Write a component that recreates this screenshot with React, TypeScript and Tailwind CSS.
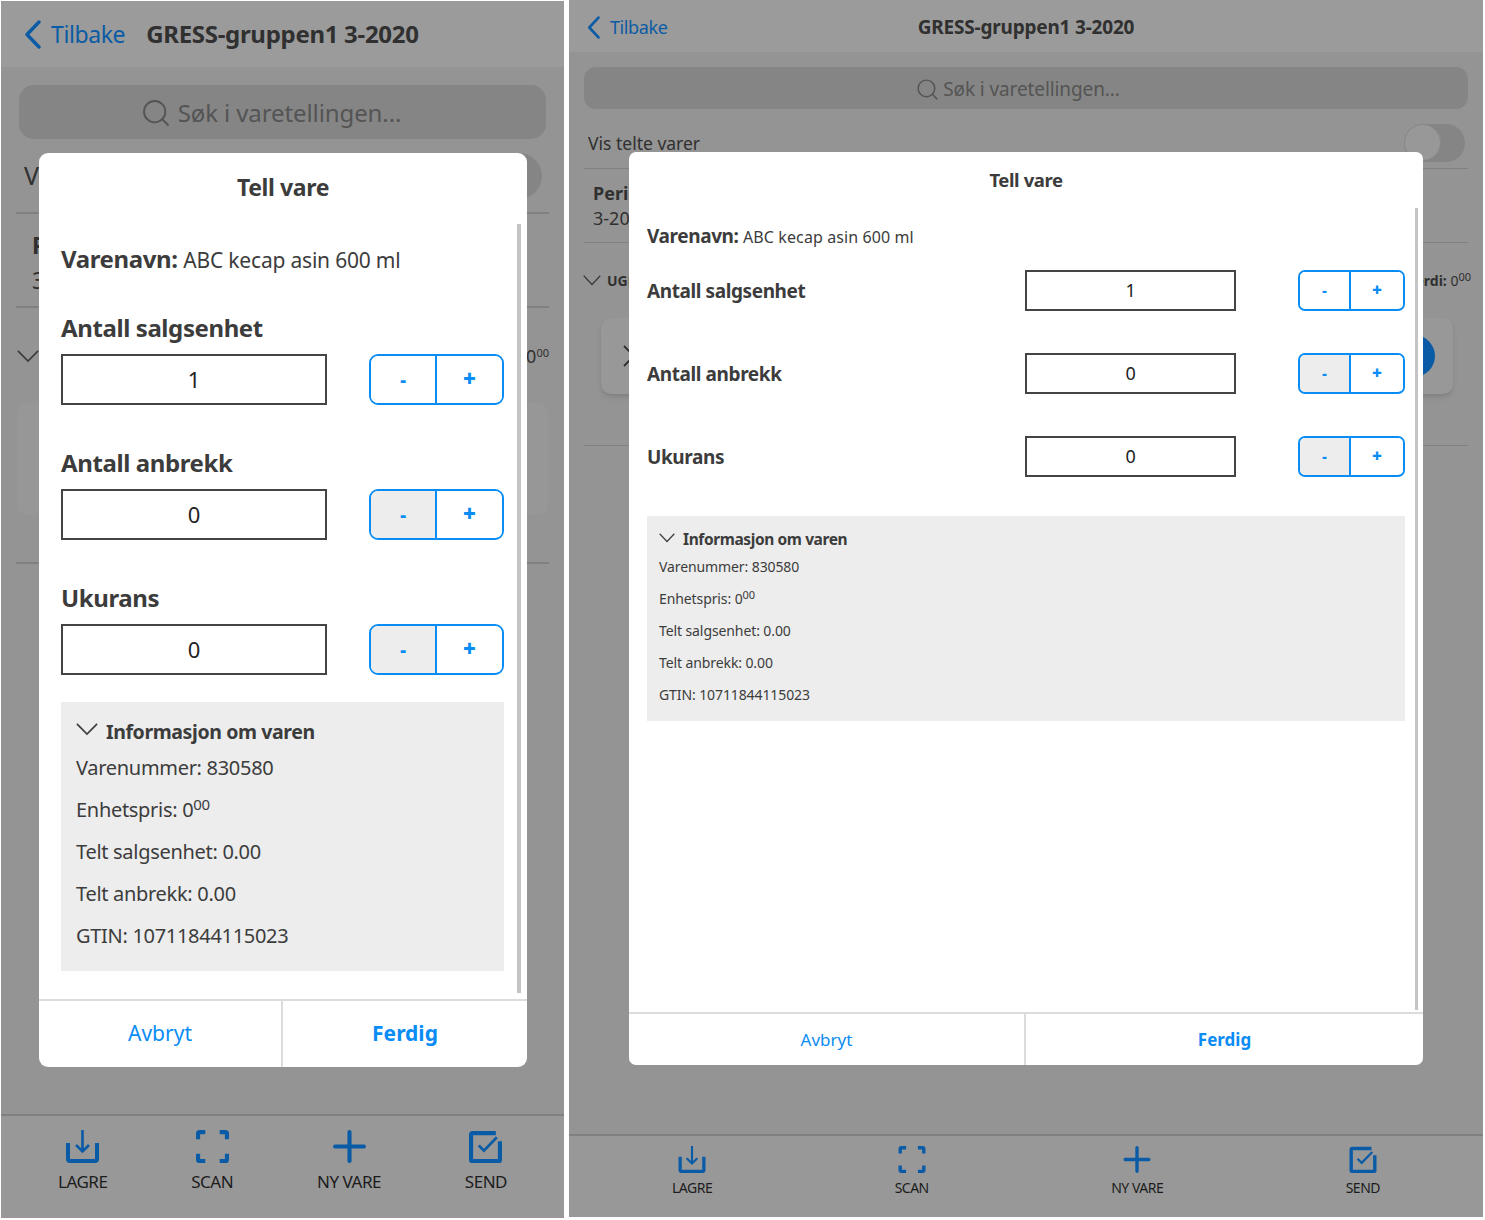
import { Search } from 'lucide-react'

const font = 'font-["Noto_Sans",sans-serif]'

function IconLagre({ className }: { className: string }) {
  return (
    <svg viewBox="0 0 33 33" className={className} fill="none" stroke="#0a5ba5">
      <path d="M2 13v16.500a1.500 1.500 0 0 0 1.500 1.500h26a1.500 1.500 0 0 0 1.500-1.500V13" strokeWidth="4" />
      <path d="M16.500 0v21M10 15l6.500 6.500L23 15" strokeWidth="2.600" />
    </svg>
  )
}

function IconScan({ className }: { className: string }) {
  return (
    <svg viewBox="0 0 32 32" className={className} fill="none" stroke="#0a5ba5" strokeWidth="4">
      <path d="M9 2H3.500a1.500 1.500 0 0 0-1.500 1.500V9M23 2h5.500a1.500 1.500 0 0 1 1.500 1.500V9M2 23v5.500A1.500 1.500 0 0 0 3.500 30H9M30 23v5.500a1.500 1.500 0 0 1-1.500 1.500H23" />
    </svg>
  )
}

function IconPlus({ className }: { className: string }) {
  return (
    <svg viewBox="0 0 32 32" className={className} fill="none" stroke="#0a5ba5" strokeWidth="4" strokeLinecap="round">
      <path d="M16 2v28M2 16h28" />
    </svg>
  )
}

function IconSend({ className }: { className: string }) {
  return (
    <svg viewBox="0 0 32 32" className={className} fill="none" stroke="#0a5ba5">
      <path d="M26 3H3.500a1.500 1.500 0 0 0-1.500 1.500v24.500a1 1 0 0 0 1 1h26a1 1 0 0 0 1-1V11" strokeWidth="4" />
      <path d="M9.500 15l5 5L27 7" strokeWidth="2.600" />
    </svg>
  )
}

function Chevron({ className, stroke = '#3c3c3c' }: { className: string; stroke?: string }) {
  return (
    <svg viewBox="0 0 24 14" className={className} fill="none" stroke={stroke} strokeWidth="1.800" preserveAspectRatio="none">
      <path d="M1 1l11 11L23 1" />
    </svg>
  )
}

function BackChevron({ className }: { className: string }) {
  return (
    <svg viewBox="0 0 17 29" className={className} fill="none" stroke="#0a5ba5" strokeWidth="3.400" strokeLinecap="round" strokeLinejoin="round" preserveAspectRatio="none">
      <path d="M15 2L3 14.500 15 27" />
    </svg>
  )
}

function Stepper({ minusOff, wide }: { minusOff: boolean; wide: boolean }) {
  return (
    <div className={`flex border-2 border-[#0a8cf5] overflow-hidden ${wide ? 'w-[135px] h-[51px] rounded-[9px]' : 'w-[107px] h-[41px] rounded-[7px]'}`}>
      <div className={`flex items-center justify-center font-black text-[#0a8cf5] border-r-2 border-[#0a8cf5] ${minusOff ? 'bg-[#ededed]' : 'bg-white'} ${wide ? 'w-[66px] text-[18px]' : 'w-[51px] text-[14px]'}`}>-</div>
      <div className={`flex-1 flex items-center justify-center font-black text-[#0a8cf5] bg-white ${wide ? 'text-[22px] -translate-y-[1px]' : 'text-[17px] -translate-y-[1px]'}`}>+</div>
    </div>
  )
}

function BottomNav({ wide }: { wide: boolean }) {
  const items = [
    { label: 'LAGRE', Icon: IconLagre },
    { label: 'SCAN', Icon: IconScan },
    { label: 'NY VARE', Icon: IconPlus },
    { label: 'SEND', Icon: IconSend },
  ]
  return (
    <div className={`mt-auto border-t-2 border-[#808080] bg-[#989898] flex justify-between ${wide ? 'h-[83px] px-[103px] pt-[10px]' : 'h-[104px] px-[57px] pt-[14px]'}`}>
      {items.map(({ label, Icon }) => (
        <div key={label} className="flex flex-col items-center">
          <Icon className={wide ? 'w-[28px] h-[27px]' : 'w-[33px] h-[33px]'} />
          <span className={`text-[#1c1c1c] tracking-[-0.5px] ${wide ? 'text-[14px] mt-[4px]' : 'text-[17px] mt-[6px]'}`}>{label}</span>
        </div>
      ))}
    </div>
  )
}

function InfoLines({ wide }: { wide: boolean }) {
  const lines = ['Varenummer: 830580', 'Enhetspris: 0', 'Telt salgsenhet: 0.00', 'Telt anbrekk: 0.00', 'GTIN: 10711844115023']
  return (
    <div className={`bg-[#ededed] text-[#3c3c3c] ${wide ? 'h-[205px] px-[12px] pt-[13px]' : 'h-[269px] px-[15px] pt-[15px]'}`}>
      <div className={`flex items-center font-bold tracking-[-0.4px] ${wide ? 'text-[15.5px] gap-[8px] h-[22px]' : 'text-[19.5px] gap-[8px] h-[30px]'}`}>
        <Chevron className={wide ? 'w-[16px] h-[10px] -translate-y-[2px]' : 'w-[22px] h-[13px] -translate-y-[3px]'} />
        Informasjon om varen
      </div>
      {lines.map((line) => (
        <div key={line} className={wide ? 'text-[14px] h-[32px] leading-[32px] tracking-[-0.1px] first:h-[24px] first:leading-[24px]' : 'text-[20px] h-[42px] leading-[42px] tracking-[-0.3px] first:h-[35px] first:leading-[40px]'}>
          {line}
          {line.startsWith('Enhetspris') && <sup className={wide ? 'text-[11px]' : 'text-[15px]'}>00</sup>}
        </div>
      ))}
    </div>
  )
}

function Modal({ wide }: { wide: boolean }) {
  const rows = ['Antall salgsenhet', 'Antall anbrekk', 'Ukurans']
  return (
    <div className={`absolute bg-white flex flex-col text-[#3c3c3c] ${wide ? 'left-[60px] top-[152px] w-[794px] h-[913px] rounded-[7px]' : 'left-[38px] top-[152px] w-[488px] h-[914px] rounded-[9px]'}`}>
      <div className={`text-center font-bold tracking-[-0.4px] ${wide ? 'text-[18.5px] pt-[14px] h-[56px]' : 'text-[23px] pt-[17px] h-[71px]'}`}>Tell vare</div>
      <div className={`relative flex-1 ${wide ? 'px-[18px]' : 'px-[22px]'}`}>
        <div className={`absolute top-0 bg-[#c4c4c4] ${wide ? 'bottom-[2px] right-[5px] w-[3px]' : 'bottom-[6px] right-[6px] w-[4px]'}`} />
        <div className={wide ? 'pt-[14px] h-[62px]' : 'pt-[17px] h-[89px]'}>
          <span className={`font-bold tracking-[-0.4px] ${wide ? 'text-[19px]' : 'text-[24px]'}`}>Varenavn: </span>
          <span className={wide ? 'text-[16px] tracking-[0.1px]' : 'text-[21px] tracking-[-0.2px]'}>ABC kecap asin 600 ml</span>
        </div>
        {rows.map((row, i) =>
          wide ? (
            <div key={row} className="flex items-center h-[41px] mb-[42px]">
              <div className="w-[381px] text-[19px] font-bold tracking-[-0.4px] pt-[2px]">{row}</div>
              <div className="w-[212px] h-[41px] border-2 border-[#444] flex items-center justify-center text-[18px] text-[#222]">{i === 0 ? '1' : '0'}</div>
              <div className="ml-[62px]"><Stepper wide={false} minusOff={i > 0} /></div>
            </div>
          ) : (
            <div key={row} className="h-[135px]">
              <div className="text-[24px] font-bold tracking-[-0.4px] h-[41px] leading-[30px]">{row}</div>
              <div className="flex justify-between w-[443px]">
                <div className="w-[266px] h-[51px] border-2 border-[#444] flex items-center justify-center text-[22px] text-[#222]">{i === 0 ? '1' : '0'}</div>
                <Stepper wide minusOff={i > 0} />
              </div>
            </div>
          ),
        )}
        <div className={wide ? 'w-[758px] -mt-[3px]' : 'w-[443px] -mt-[16px]'}>
          <InfoLines wide={wide} />
        </div>
      </div>
      <div className={`flex border-t-2 border-[#dcdcdc] ${wide ? 'h-[53px] text-[17px]' : 'h-[68px] text-[21px]'}`}>
        <div className={`flex items-center justify-center text-[#0a8cf5] border-r-2 border-[#dcdcdc] ${wide ? 'w-[397px]' : 'w-[244px]'}`}>Avbryt</div>
        <div className="flex-1 flex items-center justify-center text-[#0a8cf5] font-bold">Ferdig</div>
      </div>
    </div>
  )
}

function Phone({ wide }: { wide: boolean }) {
  return (
    <div className={`relative flex flex-col bg-[#949494] ${wide ? 'w-[914px] h-[1217px] ml-[5px]' : 'w-[563px] h-[1217px] mt-[1px] ml-[1px]'}`}>
      <div className={`relative flex items-center bg-[#9b9b9b] text-[#303030] ${wide ? 'h-[52px] pl-[18px] pt-[2px]' : 'h-[66px] pl-[23px]'}`}>
        <BackChevron className={wide ? 'w-[13px] h-[23px] mr-[10px]' : 'w-[17px] h-[29px] mr-[10px]'} />
        <span className={`text-[#0a5ba5] tracking-[-0.4px] ${wide ? 'text-[18px]' : 'text-[23px]'}`}>Tilbake</span>
        {wide ? (
          <span className="absolute left-0 right-0 text-center font-bold text-[19px] tracking-[-0.2px]">GRESS-gruppen1 3-2020</span>
        ) : (
          <span className="ml-[21px] font-bold text-[24px] tracking-[-0.3px]">GRESS-gruppen1 3-2020</span>
        )}
      </div>
      <div className={wide ? 'px-[15px] pt-[15px]' : 'px-[18px] pt-[18px]'}>
        <div className={`flex items-center justify-center bg-[#858585] text-[#545454] tracking-[-0.1px] ${wide ? 'h-[42px] rounded-[12px] text-[19px] gap-[3px] pr-[17px] pt-[2px]' : 'h-[54px] rounded-[15px] text-[24px] gap-[6px] pr-[24px] pt-[2px]'}`}>
          <Search className={wide ? 'w-[25px] h-[25px]' : 'w-[32px] h-[32px]'} strokeWidth={1.4} />
          Søk i varetellingen...
        </div>
      </div>
      <div className={`flex items-center justify-between text-[#303030] ${wide ? 'mx-[15px] h-[60px] px-[4px] text-[17.5px] border-b border-[#808080]' : 'mx-[15px] h-[75px] px-[8px] text-[25px] border-b-2 border-[#808080]'}`}>
        <span className={wide ? 'mt-[10px]' : ''}>Vis telte varer</span>
        {wide ? (
          <div className="w-[61px] h-[38px] rounded-full bg-[#858585] -mr-[1px] mt-[9px]">
            <div className="w-[37px] h-[37px] rounded-full bg-[#989898] border border-[#8a8a8a]" />
          </div>
        ) : (
          <div className="w-[61px] h-[46px] rounded-full bg-[#858585] -mr-[1px]" />
        )}
      </div>
      <div className={`text-[#303030] ${wide ? 'mx-[15px] h-[74px] px-[9px] pt-[11px] border-b border-[#808080] text-[18px]' : 'mx-[15px] h-[94px] px-[16px] pt-[14px] border-b-2 border-[#808080] text-[23px]'}`}>
        <div className="font-bold">Periode</div>
        <div className={wide ? '-mt-[2px]' : ''}>3-2020</div>
      </div>
      <div className={`flex items-center justify-between text-[#303030] ${wide ? 'ml-[14px] mr-[12px] h-[75px] text-[14px]' : 'ml-[16px] mr-[15px] h-[96px] text-[18px]'}`}>
        <div className="flex items-center gap-[6px]">
          <Chevron className={wide ? 'w-[18px] h-[11px]' : 'w-[22px] h-[13px]'} />
          <span className="font-bold">UGRUPPERT</span>
        </div>
        <span><b>Verdi:</b> 0<sup className="text-[11px]">00</sup></span>
      </div>
      <div className={`relative rounded-[10px] flex items-center justify-between ${wide ? 'bg-[#989898] shadow-md ml-[32px] mr-[30px] h-[76px] pl-[21px] pr-[18px]' : 'bg-[#979797] mx-[16px] h-[112px] -mt-[1px] pl-[21px] pr-[18px]'}`}>
        <svg viewBox="0 0 14 22" className="w-[14px] h-[22px]" fill="none" stroke="#303030" strokeWidth="1.800">
          <path d="M2 1l10 10L2 21" />
        </svg>
        {wide && <div className="w-[42px] h-[42px] rounded-full bg-[#0a5ba5]" />}
      </div>
      <div className={wide ? 'mx-[15px] mt-[51px] border-t border-[#808080]' : 'mx-[15px] mt-[47px] border-t-2 border-[#808080]'} />
      <BottomNav wide={wide} />
      <Modal wide={wide} />
    </div>
  )
}

export default function App() {
  return (
    <div className={`flex w-[1485px] h-[1220px] bg-white overflow-hidden ${font}`}>
      <Phone wide={false} />
      <Phone wide />
    </div>
  )
}
